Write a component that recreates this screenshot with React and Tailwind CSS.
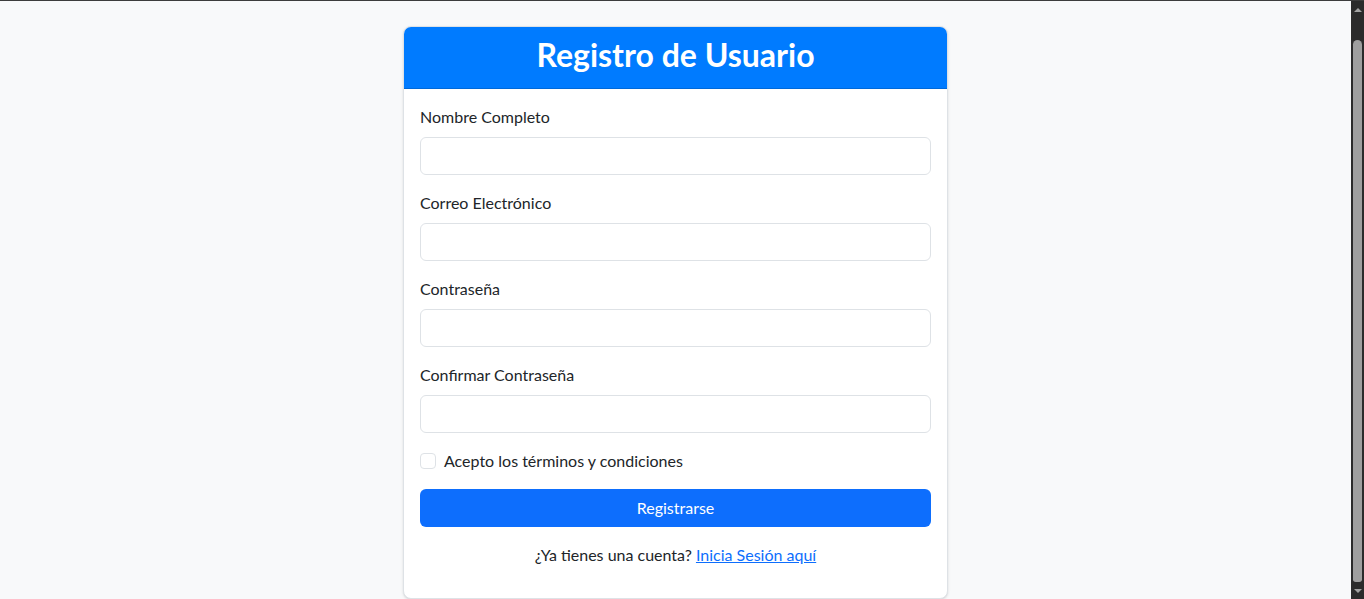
import { useState } from 'react';

const font = { fontFamily: 'Lato, "Open Sans", sans-serif' };

function Field({ label, type = 'text' }) {
  return (
    <div className="mb-4">
      <label className="block mb-2 text-[16px] leading-6 text-[#212529]">{label}</label>
      <input
        type={type}
        className="block w-full h-[38px] px-3 rounded-md border border-[#dee2e6] bg-white text-[#212529] outline-none"
      />
    </div>
  );
}

function Scrollbar() {
  return (
    <div className="w-[13px] shrink-0 bg-[#2b2b2b] flex flex-col items-center">
      <div className="h-[17px] flex items-center justify-center">
        <div className="w-0 h-0 border-x-[4px] border-x-transparent border-b-[4px] border-b-[#a3a3a3]" />
      </div>
      <div className="flex-1 w-[9px] mt-[22px] mb-[1px] bg-[#9f9f9f] rounded-t-[5px] rounded-b-[3px]" />
      <div className="h-[16px] flex items-center justify-center">
        <div className="w-0 h-0 border-x-[4px] border-x-transparent border-t-[4px] border-t-[#a3a3a3]" />
      </div>
    </div>
  );
}

export default function App() {
  const [accepted, setAccepted] = useState(false);

  return (
    <div className="h-screen flex border-t border-[#3c3c3c] overflow-hidden" style={font}>
      <div className="flex-1 bg-[#f8f9fa] pt-[25px] flex justify-center">
        <div className="w-[545px] h-fit bg-white border border-[#dee2e6] rounded-lg shadow-sm overflow-hidden">
          <div className="h-[62px] pb-[6px] bg-[#007bff] border-b border-[#0069d9] flex items-center justify-center">
            <h2 className="text-[32px] font-bold text-white leading-none">Registro de Usuario</h2>
          </div>
          <div className="p-4 pb-[31px]">
            <Field label="Nombre Completo" />
            <Field label="Correo Electrónico" type="email" />
            <Field label="Contraseña" type="password" />
            <Field label="Confirmar Contraseña" type="password" />

            <label className="flex items-center h-6 mb-4 text-[16px] text-[#212529] cursor-pointer">
              <input
                type="checkbox"
                checked={accepted}
                onChange={(e) => setAccepted(e.target.checked)}
                className="appearance-none w-4 h-4 rounded border border-[#dee2e6] bg-white checked:bg-[#0d6efd] mr-2"
              />
              Acepto los términos y condiciones
            </label>

            <button
              type="button"
              className="w-full h-[38px] rounded-md bg-[#0d6efd] text-white text-[16px]"
            >
              Registrarse
            </button>

            <p className="mt-4 text-center text-[16px] leading-6 text-[#212529]">
              ¿Ya tienes una cuenta?{' '}
              <a href="#" className="text-[#0d6efd] underline">
                Inicia Sesión aquí
              </a>
            </p>
          </div>
        </div>
      </div>
      <Scrollbar />
    </div>
  );
}
